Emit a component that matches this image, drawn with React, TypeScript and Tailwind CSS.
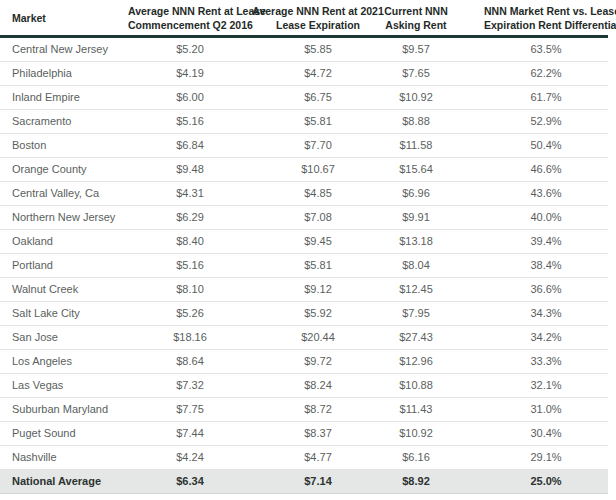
const rows: [string, string, string, string, string][] = [
  ["Central New Jersey", "$5.20", "$5.85", "$9.57", "63.5%"],
  ["Philadelphia", "$4.19", "$4.72", "$7.65", "62.2%"],
  ["Inland Empire", "$6.00", "$6.75", "$10.92", "61.7%"],
  ["Sacramento", "$5.16", "$5.81", "$8.88", "52.9%"],
  ["Boston", "$6.84", "$7.70", "$11.58", "50.4%"],
  ["Orange County", "$9.48", "$10.67", "$15.64", "46.6%"],
  ["Central Valley, Ca", "$4.31", "$4.85", "$6.96", "43.6%"],
  ["Northern New Jersey", "$6.29", "$7.08", "$9.91", "40.0%"],
  ["Oakland", "$8.40", "$9.45", "$13.18", "39.4%"],
  ["Portland", "$5.16", "$5.81", "$8.04", "38.4%"],
  ["Walnut Creek", "$8.10", "$9.12", "$12.45", "36.6%"],
  ["Salt Lake City", "$5.26", "$5.92", "$7.95", "34.3%"],
  ["San Jose", "$18.16", "$20.44", "$27.43", "34.2%"],
  ["Los Angeles", "$8.64", "$9.72", "$12.96", "33.3%"],
  ["Las Vegas", "$7.32", "$8.24", "$10.88", "32.1%"],
  ["Suburban Maryland", "$7.75", "$8.72", "$11.43", "31.0%"],
  ["Puget Sound", "$7.44", "$8.37", "$10.92", "30.4%"],
  ["Nashville", "$4.24", "$4.77", "$6.16", "29.1%"],
];

const grid = "grid grid-cols-[128px_124px_132px_100px_124px] items-center";

export default function App() {
  return (
    <div className="w-[616px] h-[500px] bg-white pr-2 text-[11px]" style={{ fontFamily: "'Liberation Sans', Arial, sans-serif" }}>
      <div className={`${grid} h-[38px] font-bold text-[10.5px] text-[#1f2b28] leading-[14px] border-b-[3px] border-[#1d3833] whitespace-nowrap`}>
        <div className="pl-3">Market</div>
        <div className="text-center">Average NNN Rent at Lease<br />Commencement Q2 2016</div>
        <div className="text-center">Average NNN Rent at 2021<br />Lease Expiration</div>
        <div className="text-center pr-9">Current NNN<br />Asking Rent</div>
        <div className="text-center">NNN Market Rent vs. Lease<br />Expiration Rent Differential</div>
      </div>
      {rows.map((r) => (
        <div key={r[0]} className={`${grid} h-6 text-[#5a5f5e] border-b border-[#e3e5e4]`}>
          <div className="pl-3">{r[0]}</div>
          <div className="text-center">{r[1]}</div>
          <div className="text-center">{r[2]}</div>
          <div className="text-center pr-9">{r[3]}</div>
          <div className="text-center">{r[4]}</div>
        </div>
      ))}
      <div className={`${grid} h-6 bg-[#e4e7e6] font-bold text-[#2c3331] border-b border-[#d0d4d2]`}>
        <div className="pl-3">National Average</div>
        <div className="text-center">$6.34</div>
        <div className="text-center">$7.14</div>
        <div className="text-center pr-9">$8.92</div>
        <div className="text-center">25.0%</div>
      </div>
    </div>
  );
}
